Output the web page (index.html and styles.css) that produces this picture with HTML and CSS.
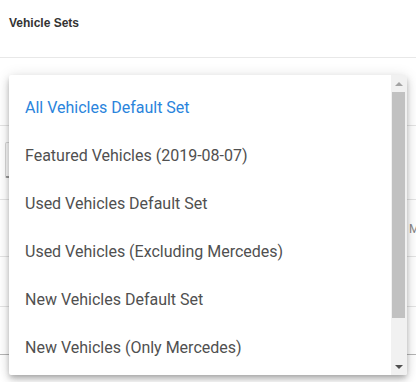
FILE: index.html
```html
<!DOCTYPE html>
<html lang="en">
<head>
  <meta charset="UTF-8">
  <title>Vehicle Sets</title>
  <link rel="stylesheet" href="styles.css">
</head>
<body>
  <div class="page">
    <div class="page-header">
      <h3>Vehicle Sets</h3>
    </div>
    <div class="page-body">
      <div class="row row-top"></div>
      <div class="row row-form">
        <div class="select-box"></div>
      </div>
      <div class="row row-head"><span class="col-label">M</span></div>
      <div class="row row-mid"></div>
      <div class="row row-dark"></div>
    </div>

    <div class="menu-panel">
      <ul class="menu-list">
        <li class="selected">All Vehicles Default Set</li>
        <li>Featured Vehicles (2019-08-07)</li>
        <li>Used Vehicles Default Set</li>
        <li>Used Vehicles (Excluding Mercedes)</li>
        <li>New Vehicles Default Set</li>
        <li>New Vehicles (Only Mercedes)</li>
      </ul>
      <div class="scrollbar">
        <div class="scroll-btn up"></div>
        <div class="scroll-track">
          <div class="scroll-thumb"></div>
        </div>
        <div class="scroll-btn down"></div>
      </div>
    </div>
  </div>
</body>
</html>
```

FILE: styles.css
```css
body {
  margin: 0;
  font-family: Roboto, "Liberation Sans", sans-serif;
  background: #fff;
}
.page {
  position: relative;
  width: 416px;
  height: 382px;
  overflow: hidden;
}
.page-header {
  height: 58px;
  box-sizing: border-box;
  padding: 16px 9px 0;
  border-bottom: 1px solid #e8e8e8;
}
.page-header h3 {
  margin: 0;
  font-family: "Liberation Sans", Arial, sans-serif;
  font-size: 12px;
  font-weight: bold;
  color: #333;
}
.row {
  box-sizing: border-box;
  border-bottom: 1px solid #e4e4e4;
}
.row-top {
  height: 68px;
}
.row-form {
  height: 74px;
  padding: 16px 0 0 5px;
}
.select-box {
  width: 200px;
  height: 36px;
  box-sizing: border-box;
  border: 1px solid #d6d6d6;
  border-bottom: 2px solid #999;
  border-radius: 2px;
  background: #fafafa;
}
.row-head {
  height: 57px;
  display: flex;
  justify-content: flex-end;
  padding: 22px 0 0;
}
.col-label {
  font-size: 12px;
  color: #888;
  width: 7px;
}
.row-mid {
  height: 50px;
}
.row-dark {
  height: 48px;
  border-bottom: 1px solid #b5b5b5;
}
.menu-panel {
  position: absolute;
  top: 75px;
  left: 9px;
  width: 398px;
  height: 300px;
  display: flex;
  background: #fff;
  border-radius: 2px;
  box-shadow: 0 3px 5px -1px rgba(0,0,0,0.2), 0 5px 8px 0 rgba(0,0,0,0.14), 0 1px 14px 0 rgba(0,0,0,0.12);
  overflow: hidden;
}
.menu-list {
  flex: 1;
  list-style: none;
  margin: 0;
  padding: 9px 0 0;
}
.menu-list li {
  height: 48px;
  line-height: 48px;
  padding: 0 16px;
  font-size: 16px;
  color: #505050;
  white-space: nowrap;
}
.menu-list li.selected {
  color: #2a84dc;
}
.scrollbar {
  width: 16px;
  display: flex;
  flex-direction: column;
  background: #f1f1f1;
}
.scroll-btn {
  height: 17px;
  display: flex;
  align-items: center;
  justify-content: center;
}
.scroll-btn::before {
  content: "";
  border-left: 4px solid transparent;
  border-right: 4px solid transparent;
}
.scroll-btn.up::before {
  border-bottom: 4px solid #a3a3a3;
}
.scroll-btn.down::before {
  border-top: 4px solid #505050;
}
.scroll-track {
  flex: 1;
}
.scroll-thumb {
  margin: 0 2px 0 1px;
  height: 226px;
  background: #c1c1c1;
}
```
